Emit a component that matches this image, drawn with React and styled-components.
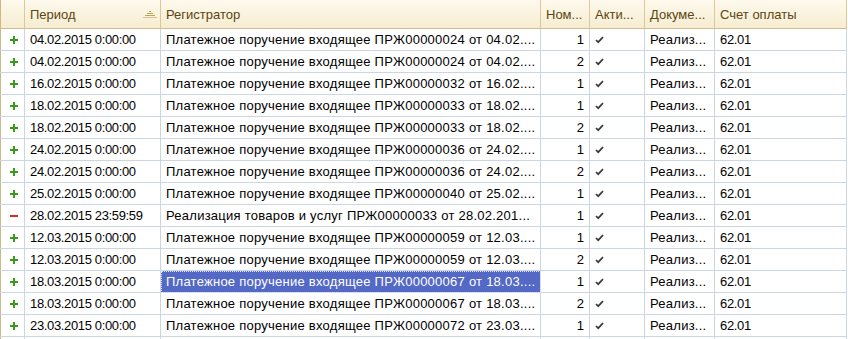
import React from 'react';
import styled, { createGlobalStyle } from 'styled-components';

const GlobalStyle = createGlobalStyle`
  html, body {
    margin: 0;
    padding: 0;
    background: #fff;
  }
  body {
    font-family: "Liberation Sans", Arial, sans-serif;
  }
`;

const Frame = styled.div`
  width: 848px;
  height: 339px;
  overflow: hidden;
  background: #fff;
`;

const Table = styled.table`
  width: 846px;
  border-collapse: collapse;
  table-layout: fixed;
  border-left: 1px solid #c9b98c;
  font-size: 13px;
  color: #000;
`;

const HeadCell = styled.th`
  height: 28px;
  padding: 0 5px;
  text-align: left;
  font-weight: normal;
  color: #5b4510;
  background: linear-gradient(#fdf9ec, #f6ecd0);
  border-bottom: 1px solid #cdbd8f;
  border-right: 1px solid #d9c99c;
  white-space: nowrap;
  overflow: hidden;
  position: relative;
`;

const SortMark = styled.svg`
  position: absolute;
  right: 3px;
  top: 11px;
`;

const Cell = styled.td`
  height: 21px;
  padding: 0 5px;
  border-bottom: 1px solid #cbd6e4;
  border-right: 1px solid #cbd6e4;
  white-space: nowrap;
  overflow: hidden;
  text-align: ${p => (p.$right ? 'right' : 'left')};
  letter-spacing: ${p => (p.$tight ? '-0.35px' : p.$wide ? '0.25px' : '0')};
  vertical-align: middle;
`;

const IconCell = styled(Cell)`
  padding: 0 0 0 2px;
  text-align: center;
  line-height: 0;
`;

const SelectedCell = styled(Cell)`
  background: #5468c6;
  color: #fff;
  outline: 1px dotted #dfe4ff;
  outline-offset: -1px;
`;

const Plus = () => (
  <svg width="8" height="8" viewBox="0 0 8 8">
    <rect x="3" y="0" width="2" height="8" fill="#3a9a1c" />
    <rect x="0" y="3" width="8" height="2" fill="#3a9a1c" />
  </svg>
);

const Minus = () => (
  <svg width="8" height="8" viewBox="0 0 8 8">
    <rect x="0" y="3" width="8" height="2" fill="#d42a2a" />
  </svg>
);

const Check = () => (
  <svg width="9" height="8" viewBox="0 0 9 8">
    <path d="M1 4 L3.2 6.2 L8 1.2" stroke="#3a3a3a" strokeWidth="1.7" fill="none" />
  </svg>
);

const columns = [
  { w: 24, title: '' },
  { w: 136, title: 'Период', sort: true },
  { w: 380, title: 'Регистратор' },
  { w: 49, title: 'Ном...' },
  { w: 55, title: 'Акти...' },
  { w: 70, title: 'Докуме...' },
  { w: 132, title: 'Счет оплаты' },
];

const pp = 'Платежное поручение входящее ПРЖ';

const rows = [
  ['+', '04.02.2015 0:00:00', pp + '00000024 от 04.02....', 1],
  ['+', '04.02.2015 0:00:00', pp + '00000024 от 04.02....', 2],
  ['+', '16.02.2015 0:00:00', pp + '00000032 от 16.02....', 1],
  ['+', '18.02.2015 0:00:00', pp + '00000033 от 18.02....', 1],
  ['+', '18.02.2015 0:00:00', pp + '00000033 от 18.02....', 2],
  ['+', '24.02.2015 0:00:00', pp + '00000036 от 24.02....', 1],
  ['+', '24.02.2015 0:00:00', pp + '00000036 от 24.02....', 2],
  ['+', '25.02.2015 0:00:00', pp + '00000040 от 25.02....', 1],
  ['-', '28.02.2015 23:59:59', 'Реализация товаров и услуг ПРЖ00000033 от 28.02.201...', 1],
  ['+', '12.03.2015 0:00:00', pp + '00000059 от 12.03....', 1],
  ['+', '12.03.2015 0:00:00', pp + '00000059 от 12.03....', 2],
  ['+', '18.03.2015 0:00:00', pp + '00000067 от 18.03....', 1, true],
  ['+', '18.03.2015 0:00:00', pp + '00000067 от 18.03....', 2],
  ['+', '23.03.2015 0:00:00', pp + '00000072 от 23.03....', 1],
];

export default function App() {
  return (
    <Frame>
      <GlobalStyle />
      <Table>
        <colgroup>
          {columns.map((c, i) => (
            <col key={i} style={{ width: c.w }} />
          ))}
        </colgroup>
        <thead>
          <tr>
            {columns.map((c, i) => (
              <HeadCell key={i}>
                {c.title}
                {c.sort && (
                  <SortMark width="14" height="7" viewBox="0 0 14 7">
                    <rect x="6" y="0" width="2" height="1" fill="#bfa45c" />
                    <rect x="4" y="2" width="6" height="1" fill="#bfa45c" />
                    <rect x="2" y="4" width="10" height="1" fill="#bfa45c" />
                    <rect x="0" y="6" width="14" height="1" fill="#d6c28a" />
                  </SortMark>
                )}
              </HeadCell>
            ))}
          </tr>
        </thead>
        <tbody>
          {rows.map(([sign, date, doc, num, sel], i) => {
            const DocCell = sel ? SelectedCell : Cell;
            return (
              <tr key={i}>
                <IconCell>{sign === '+' ? <Plus /> : <Minus />}</IconCell>
                <Cell $tight>{date}</Cell>
                <DocCell $wide>{doc}</DocCell>
                <Cell $right>{num}</Cell>
                <Cell>
                  <Check />
                </Cell>
                <Cell $wide>Реализ...</Cell>
                <Cell $tight>62.01</Cell>
              </tr>
            );
          })}
          <tr>
            <IconCell />
            <Cell />
            <Cell />
            <Cell />
            <Cell />
            <Cell />
            <Cell />
          </tr>
        </tbody>
      </Table>
    </Frame>
  );
}
